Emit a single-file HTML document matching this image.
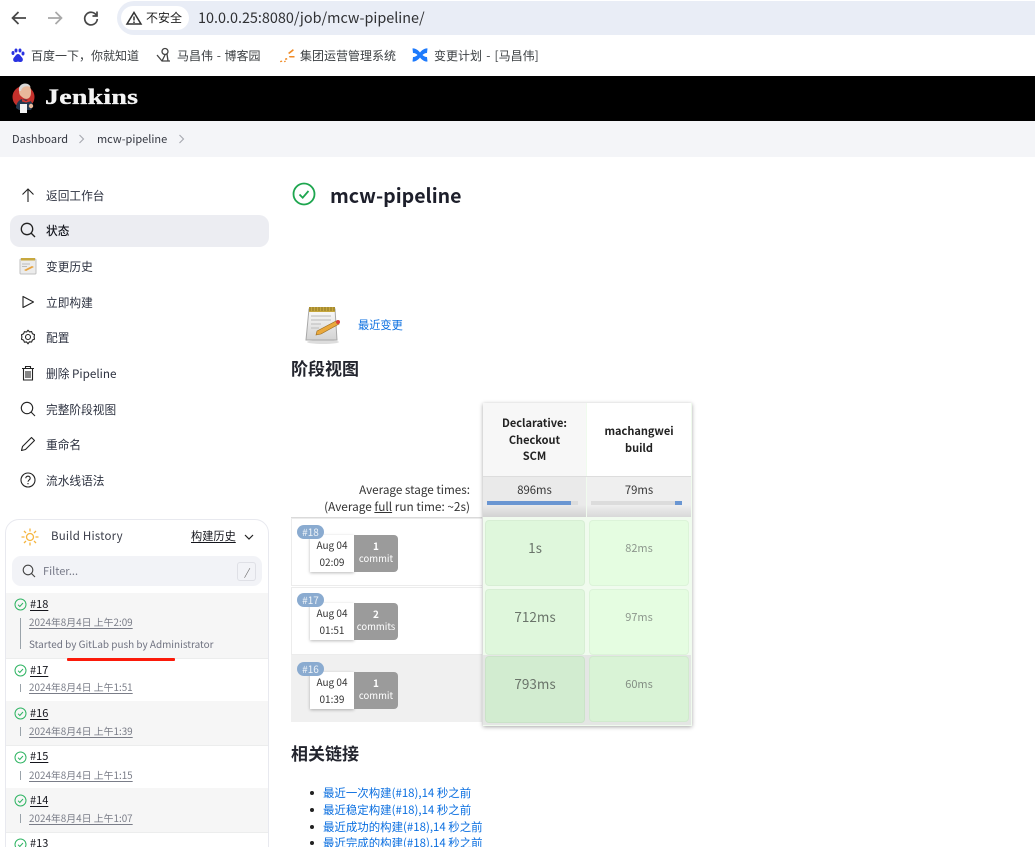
<!DOCTYPE html>
<html lang="zh"><head><meta charset="utf-8"><title>mcw-pipeline</title>
<style>
html{margin:0;padding:0;background:#fff;width:1035px;height:847px;overflow:hidden;}
body{margin:0;padding:0;background:#fff;width:1035px;height:847px;overflow:hidden;position:relative;font-family:"Noto Sans CJK SC","Liberation Sans",sans-serif;color:#1f2430;font-size:12px;}
.a{position:absolute;}
.t{position:absolute;white-space:nowrap;line-height:16px;}
svg{position:absolute;overflow:visible;}
.nav{left:46px;font-size:11.7px;color:#2d3240;}
.bm{top:47px;font-size:12px;color:#3c4043;line-height:18px;word-spacing:1px;}
.num{left:30px;font-size:11px;color:#14151c;text-decoration:underline;text-underline-offset:2px;}
.dt{left:29px;font-size:9.9px;color:#7a7d88;text-decoration:underline;text-underline-offset:2px;}
.tick{left:20px;width:1px;background:#9aa3aa;}
.lnk{left:323px;font-size:11.45px;color:#0b6fe0;}
.bul{width:4px;height:4px;border-radius:50%;background:#222;}
.badge{left:297px;width:27px;height:14px;border-radius:7px;background:#8aabd0;color:#eef3f8;font-size:10px;line-height:14px;text-align:center;z-index:3;}
.dc{left:310px;width:44px;height:37px;background:#fff;box-shadow:0 1px 3px rgba(0,0,0,.28);font-size:10px;color:#333;text-align:center;line-height:17px;z-index:2;padding-top:1px;box-sizing:border-box;}
.cm{left:354px;width:44px;height:37px;background:#9b9b9b;border-radius:0 4px 4px 0;color:#fff;font-size:9.5px;text-align:center;line-height:13px;z-index:2;}
.cm b{display:block;font-size:10px;padding-top:4px;}
.cell{border:1px solid rgba(0,0,0,.035);border-radius:4px;box-sizing:border-box;display:flex;align-items:center;justify-content:center;color:#6a746a;padding-bottom:13px;}
</style></head><body>

<!-- browser toolbar -->
<svg style="left:10px;top:9px" width="18" height="18" fill="none" stroke="#474747" stroke-width="1.7"><path d="M2.5 9H16M8.5 3L2.5 9l6 6"/></svg>
<svg style="left:46px;top:9px" width="18" height="18" fill="none" stroke="#a8a8a8" stroke-width="1.7"><path d="M15.5 9H2M9.5 3l6 6-6 6"/></svg>
<svg style="left:82px;top:9px" width="18" height="18" fill="none" stroke="#474747" stroke-width="1.7"><path d="M14.5 6.5A6.3 6.3 0 1 0 15.3 10"/><path d="M15 2.500v4.500h-4.500"/></svg>
<div class="a" style="left:117px;top:1px;width:940px;height:34px;border-radius:17px;background:#e9edf6"></div>
<div class="a" style="left:121px;top:6px;width:68px;height:24px;border-radius:12px;background:#fff"></div>
<svg style="left:126px;top:11px" width="16" height="14" fill="none" stroke="#333" stroke-width="1.5"><path d="M8 1.5L15 13H1z"/><path d="M8 5.5v4M8 10.5v1.500"/></svg>
<div class="t" style="left:146px;top:10px;font-size:12px;color:#222">不安全</div>
<div class="t" style="left:198px;top:9px;font-size:14.4px;line-height:18px;color:#2f3033">10.0.0.25:8080/job/mcw-pipeline/</div>

<!-- bookmarks -->
<svg style="left:10px;top:48px" width="15" height="15" fill="#2932e1"><ellipse cx="3" cy="5" rx="1.5" ry="2"/><ellipse cx="6" cy="2.5" rx="1.5" ry="2"/><ellipse cx="10" cy="2.5" rx="1.5" ry="2"/><ellipse cx="13" cy="5.5" rx="1.5" ry="2"/><path d="M8 6c-2 0-2.500 2-4 3.500C2.500 11 3 14 5.500 14c1 0 1.500-.4 2.500-.4s1.500.4 2.500.4c2.500 0 3-3 1.500-4.500C10.500 8 10 6 8 6z"/></svg>
<div class="t bm" style="left:31px">百度一下，你就知道</div>
<svg style="left:156px;top:47px" width="16" height="16" fill="none" stroke="#444" stroke-width="1.3"><circle cx="9" cy="4.5" r="3"/><path d="M1 8l5 6h8M11 7l1 7M6 14l3-6"/></svg>
<div class="t bm" style="left:177px">马昌伟 - 博客园</div>
<svg style="left:279px;top:48px" width="16" height="15" fill="#f08a24"><path d="M9 5l5-4 .8 1.500-4.500 3.500zM10 8h5.500v1.500H10.500zM6 10.500l2-.5.3 1.500-2 .5zM1 13l2-.5.3 1.300-2 .5zM5 13l1.500-.4.3 1.300-1.500.4z"/></svg>
<div class="t bm" style="left:300px">集团运营管理系统</div>
<svg style="left:412px;top:47px" width="16" height="16" fill="#1d7afc"><path d="M.5 1.500C3 1 6 3 8 5.500 10 3 13 1 15.500 1.500L15 6c-2 0-3.500 1-4.500 2 1 1 2.500 2 4.500 2l.5 4.500C13 15 10 13 8 10.500 6 13 3 15 .5 14.500L1 10c2 0 3.500-1 4.500-2C4.500 7 3 6 1 6z"/></svg>
<div class="t bm" style="left:434px;word-spacing:1.500px">变更计划 - [马昌伟]</div>

<!-- header -->
<div class="a" style="left:0;top:76px;width:1035px;height:45px;background:#000"></div>
<svg style="left:12px;top:82px" width="26" height="32">
<circle cx="11.5" cy="15" r="11" fill="#c4302b"/>
<path d="M7 9C7 4 10 2 13 2c4 0 6 3 6 7 0 3 0 5-2 7-2 1.500-5 1-7-1-2-1.500-3-3-3-6z" fill="#e8b89a"/>
<path d="M7 9C6 4 10 1.500 13 1.500c3 0 5 1.500 5.500 3.500C15 3.500 10 4 9 9z" fill="#d8d8d8"/>
<path d="M4 26c0-5 3-8 6-9l6 1c3 1 5 3 5 6l-2 4H7z" fill="#24384f"/>
<path d="M10 17l4 2 4-2v2.500l-4 1-4-1z" fill="#d33833"/>
<rect x="8" y="22" width="7" height="9" fill="#f3f3f3"/>
<circle cx="19" cy="24" r="2.200" fill="#e8b89a"/>
</svg>
<div class="t" style="left:45px;top:84px;font-family:'Liberation Serif',serif;font-weight:700;font-size:22.5px;line-height:26px;color:#f4f4f4;letter-spacing:.2px;transform:scaleX(1.24);transform-origin:0 50%;-webkit-text-stroke:.35px #f4f4f4">Jenkins</div>

<!-- breadcrumb -->
<div class="a" style="left:0;top:121px;width:1035px;height:36px;background:#f4f5f8"></div>
<div class="t" style="left:12px;top:131px;font-size:11px;color:#33363f">Dashboard</div>
<svg style="left:78px;top:134px" width="8" height="10" fill="none" stroke="#a6a8ae" stroke-width="1.1"><path d="M1.5 1l4 4-4 4"/></svg>
<div class="t" style="left:97px;top:131px;font-size:11px;color:#33363f">mcw-pipeline</div>
<svg style="left:178px;top:134px" width="8" height="10" fill="none" stroke="#a6a8ae" stroke-width="1.1"><path d="M1.5 1l4 4-4 4"/></svg>

<!-- sidebar -->
<div class="a" style="left:10px;top:215px;width:259px;height:32px;border-radius:10px;background:#ecedf2"></div>
<svg style="left:20px;top:187px" width="16" height="16" fill="none" stroke="#222" stroke-width="1.1"><path d="M8 15V2M2.500 7.500L8 2l5.500 5.500"/></svg>
<div class="t nav" style="top:188px">返回工作台</div>
<svg style="left:20px;top:222px" width="16" height="16" fill="none" stroke="#222" stroke-width="1.3"><circle cx="7" cy="7" r="5.7"/><path d="M11 11l4 4"/></svg>
<div class="t nav" style="top:223px;font-weight:500;color:#15171f">状态</div>
<svg style="left:19px;top:257px" width="19" height="18"><rect x="1" y="2" width="16" height="15" rx="1" fill="#ececec" stroke="#c0c0c0"/><rect x="2" y="1" width="14" height="2.5" fill="#c7a83f"/><path d="M5 13l8-4 2 1-8 4z" fill="#e8a33d"/><path d="M3 7h8M3 9.5h5" stroke="#bbb"/></svg>
<div class="t nav" style="top:259px">变更历史</div>
<svg style="left:20px;top:294px" width="16" height="16" fill="none" stroke="#222" stroke-width="1.1"><path d="M3 2.500v11L13.500 8z" stroke-linejoin="round"/></svg>
<div class="t nav" style="top:295px">立即构建</div>
<svg style="left:20px;top:329px" width="16" height="16" fill="none" stroke="#222" stroke-width="1.1"><path d="M8 1.200l1.400 1.700 2.200-.3.8 2.100 2.100.9-.4 2.300.4 2.200-2.100.9-.8 2.100-2.200-.3L8 14.800l-1.400-1.900-2.200.3-.8-2.100-2.100-.9.4-2.200-.4-2.300 2.100-.9.8-2.100 2.200.3z" stroke-linejoin="round"/><circle cx="8" cy="8" r="2.5"/></svg>
<div class="t nav" style="top:330px">配置</div>
<svg style="left:20px;top:365px" width="16" height="16" fill="none" stroke="#222" stroke-width="1.1"><path d="M2 3.500h12M5.500 3.500V1.500h5v2M3.500 3.500v11.500h9V3.500M6 6v7M8 6v7M10 6v7"/></svg>
<div class="t nav" style="top:366px">删除 Pipeline</div>
<svg style="left:20px;top:401px" width="16" height="16" fill="none" stroke="#222" stroke-width="1.1"><circle cx="7" cy="7" r="5.7"/><path d="M11 11l4 4"/></svg>
<div class="t nav" style="top:402px">完整阶段视图</div>
<svg style="left:20px;top:436px" width="16" height="16" fill="none" stroke="#222" stroke-width="1.1"><path d="M1.500 14.500l1-4L11.500 1.500l3 3-9 9z" stroke-linejoin="round"/></svg>
<div class="t nav" style="top:437px">重命名</div>
<svg style="left:20px;top:472px" width="16" height="16" fill="none" stroke="#222" stroke-width="1.1"><circle cx="8" cy="8" r="7"/><path d="M5.800 6.200C5.800 3.500 10.200 3.500 10.200 6.200c0 1.800-2.200 1.800-2.200 3.600M8 11v1.200"/></svg>
<div class="t nav" style="top:473px">流水线语法</div>

<!-- build history -->
<div class="a" style="left:5px;top:519px;width:262px;height:340px;border:1px solid #e8e9ef;border-radius:14px"></div>
<svg style="left:21px;top:528px" width="18" height="18" fill="none" stroke="#f5b53f" stroke-width="1.3"><circle cx="9" cy="9" r="3.5"/><path d="M9 .5v3M9 14.500v3M.5 9h3M14.500 9h3M3 3l2 2M13 13l2 2M3 15l2-2M13 5l2-2"/></svg>
<div class="t" style="left:51px;top:528px;font-size:11.5px;color:#3a3d49;letter-spacing:.2px">Build History</div>
<div class="t" style="left:191px;top:528px;font-size:11.2px;color:#14151c;text-decoration:underline;text-underline-offset:2px">构建历史</div>
<svg style="left:244px;top:534px" width="10" height="7" fill="none" stroke="#222" stroke-width="1.2"><path d="M1 1l4 4 4-4"/></svg>
<div class="a" style="left:12px;top:556px;width:250px;height:30px;border-radius:9px;background:#f2f3f7"></div>
<svg style="left:22px;top:564px" width="14" height="14" fill="none" stroke="#444" stroke-width="1.1"><circle cx="6" cy="6" r="4.8"/><path d="M9.500 9.500L13 13"/></svg>
<div class="t" style="left:43px;top:563px;font-size:11px;color:#777a88">Filter...</div>
<div class="a" style="left:237px;top:562px;width:17px;height:17px;border:1px solid #dfe0e6;border-radius:3px;text-align:center;line-height:17px;font-size:10px;color:#666;font-style:italic">/</div>

<div class="a" style="left:6px;top:593px;width:262px;height:65px;background:#f6f6f6"></div>
<div class="a" style="left:6px;top:701px;width:262px;height:44px;background:#f6f6f6"></div>
<div class="a" style="left:6px;top:788px;width:262px;height:44px;background:#f6f6f6"></div>
<div class="a" style="left:6px;top:658px;width:262px;height:1px;background:#eceded"></div>
<div class="a" style="left:6px;top:745px;width:262px;height:1px;background:#eceded"></div>
<div class="a" style="left:6px;top:832px;width:262px;height:1px;background:#eceded"></div>

<svg style="left:14px;top:598px" width="13" height="13" fill="none" stroke="#2fb463" stroke-width="1"><circle cx="6.5" cy="6.5" r="5.5"/><path d="M4 6.700l1.800 1.800L9 5"/></svg>
<div class="t num" style="top:596px">#18</div>
<div class="a tick" style="top:618px;height:31px"></div>
<div class="t dt" style="top:614px">2024年8月4日 上午2:09</div>
<div class="t" style="left:29px;top:636px;font-size:9.95px;color:#6f7280">Started by GitLab push by Administrator</div>
<div class="a" style="left:67px;top:658px;width:108px;height:3px;background:#fb1a0a;border-radius:1px"></div>

<svg style="left:14px;top:664px" width="13" height="13" fill="none" stroke="#2fb463" stroke-width="1"><circle cx="6.5" cy="6.5" r="5.5"/><path d="M4 6.700l1.800 1.800L9 5"/></svg>
<div class="t num" style="top:662px">#17</div>
<div class="a tick" style="top:684px;height:8px"></div>
<div class="t dt" style="top:679px">2024年8月4日 上午1:51</div>

<svg style="left:14px;top:707px" width="13" height="13" fill="none" stroke="#2fb463" stroke-width="1"><circle cx="6.5" cy="6.5" r="5.5"/><path d="M4 6.700l1.800 1.800L9 5"/></svg>
<div class="t num" style="top:705px">#16</div>
<div class="a tick" style="top:727px;height:9px"></div>
<div class="t dt" style="top:723px">2024年8月4日 上午1:39</div>

<svg style="left:14px;top:751px" width="13" height="13" fill="none" stroke="#2fb463" stroke-width="1"><circle cx="6.5" cy="6.5" r="5.5"/><path d="M4 6.700l1.800 1.800L9 5"/></svg>
<div class="t num" style="top:748px">#15</div>
<div class="a tick" style="top:771px;height:9px"></div>
<div class="t dt" style="top:767px">2024年8月4日 上午1:15</div>

<svg style="left:14px;top:794px" width="13" height="13" fill="none" stroke="#2fb463" stroke-width="1"><circle cx="6.5" cy="6.5" r="5.5"/><path d="M4 6.700l1.800 1.800L9 5"/></svg>
<div class="t num" style="top:792px">#14</div>
<div class="a tick" style="top:814px;height:9px"></div>
<div class="t dt" style="top:810px">2024年8月4日 上午1:07</div>

<svg style="left:14px;top:838px" width="13" height="13" fill="none" stroke="#2fb463" stroke-width="1"><circle cx="6.5" cy="6.5" r="5.5"/><path d="M4 6.700l1.800 1.800L9 5"/></svg>
<div class="t" style="left:30px;top:835px;font-size:11px;color:#14151c">#13</div>

<!-- main -->
<svg style="left:292px;top:182px" width="24" height="24" fill="none" stroke="#1ea64f" stroke-width="1.8"><circle cx="12" cy="12" r="10.5"/><path d="M7.500 12.500l3.200 3.200L16.500 9"/></svg>
<div class="t" style="left:330px;top:181px;font-size:19.5px;line-height:28px;font-weight:700;color:#1d1f2b">mcw-pipeline</div>

<svg style="left:305px;top:306px" width="38" height="40">
<defs><linearGradient id="n" x1="0" y1="0" x2="0" y2="1"><stop offset="0" stop-color="#fbfbfb"/><stop offset="1" stop-color="#d3d3d3"/></linearGradient></defs>
<ellipse cx="18" cy="36" rx="16" ry="2" fill="#ddd"/>
<path d="M4 3h26l2 31H1z" fill="url(#n)" stroke="#a8a8a8"/>
<rect x="4" y="1" width="26" height="5" fill="#c5a63d"/>
<path d="M5 1v4M8 1v4M11 1v4M14 1v4M17 1v4M20 1v4M23 1v4M26 1v4M29 1v4" stroke="#8a7425" stroke-width="1"/>
<path d="M6 10h20M6 14h20M6 18h10M6 22h8" stroke="#c4c4c4" stroke-width="1.2"/>
<path d="M12 25l19-10 3 3-18 10-5 1z" fill="#e9a83c" stroke="#9a6a1c" stroke-width=".6"/>
<circle cx="33" cy="16" r="2" fill="#d9413a"/>
</svg>
<div class="t" style="left:358px;top:317px;font-size:11.2px;color:#0b6fe0">最近变更</div>
<div class="t" style="left:291px;top:357px;font-size:17px;line-height:22px;font-weight:700;color:#23252e">阶段视图</div>

<!-- stage view left -->
<div class="t" style="right:565px;top:482px;font-size:11.7px;color:#333">Average stage times:</div>
<div class="t" style="right:565px;top:499px;font-size:11.8px;color:#333">(Average <u>full</u> run time: ~2s)</div>
<div class="a" style="left:291px;top:517px;width:191px;height:1px;background:#dadada"></div>
<div class="a" style="left:291px;top:518px;width:190px;height:66px;border:1px solid #ececec;border-right:0"></div>
<div class="a" style="left:291px;top:587px;width:190px;height:66px;border:1px solid #ececec;border-right:0"></div>
<div class="a" style="left:291px;top:655px;width:191px;height:67px;background:#f0f0f0"></div>

<div class="a badge" style="top:525px">#18</div>
<div class="a dc" style="top:535px"><div>Aug 04</div><div>02:09</div></div>
<div class="a cm" style="top:535px"><b>1</b>commit</div>
<div class="a badge" style="top:593px">#17</div>
<div class="a dc" style="top:603px"><div>Aug 04</div><div>01:51</div></div>
<div class="a cm" style="top:603px"><b>2</b>commits</div>
<div class="a badge" style="top:662px">#16</div>
<div class="a dc" style="top:672px"><div>Aug 04</div><div>01:39</div></div>
<div class="a cm" style="top:672px"><b>1</b>commit</div>

<!-- stage panel -->
<div class="a" style="left:483px;top:403px;width:209px;height:323px;background:#f0fbee;box-shadow:0 1px 4px rgba(0,0,0,.35)"></div>
<div class="a" style="left:483px;top:403px;width:103px;height:73px;background:#f7f7f7;text-align:center;font-size:11px;line-height:16.5px;font-weight:700;color:#222;box-sizing:border-box;padding-top:12px">Declarative:<br>Checkout<br>SCM</div>
<div class="a" style="left:587px;top:403px;width:104px;height:73px;background:#fff;text-align:center;font-size:11px;line-height:16.5px;font-weight:700;color:#222;box-sizing:border-box;padding-top:20px">machangwei<br>build</div>
<div class="a" style="left:483px;top:476px;width:208px;height:1px;background:#ddd"></div>
<div class="a" style="left:483px;top:477px;width:103px;height:40px;background:linear-gradient(#eaeaea 0,#eaeaea 70%,#d2d2d2 100%)"></div>
<div class="a" style="left:587px;top:477px;width:104px;height:40px;background:linear-gradient(#efefef 0,#efefef 70%,#d8d8d8 100%)"></div>
<div class="t" style="left:483px;top:482px;width:103px;text-align:center;font-size:11.3px;color:#333">896ms</div>
<div class="t" style="left:587px;top:482px;width:104px;text-align:center;font-size:11.3px;color:#333">79ms</div>
<div class="a" style="left:487px;top:501px;width:91px;height:4px;background:#dcdcdc"></div>
<div class="a" style="left:487px;top:501px;width:84px;height:4px;background:#6a96d2"></div>
<div class="a" style="left:591px;top:501px;width:91px;height:4px;background:#dcdcdc"></div>
<div class="a" style="left:675px;top:501px;width:7px;height:4px;background:#6a96d2"></div>

<div class="a cell" style="left:485px;top:520px;width:100px;height:66px;background:#dff7dc;font-size:13.5px">1s</div>
<div class="a cell" style="left:589px;top:520px;width:100px;height:66px;background:#e5fde1;font-size:11px;color:#8d978d;padding-bottom:11px">82ms</div>
<div class="a" style="left:483px;top:655px;width:208px;height:70px;background:#e4e6e4"></div>
<div class="a cell" style="left:485px;top:589px;width:100px;height:66px;background:#dff7dc;font-size:13.5px">712ms</div>
<div class="a cell" style="left:589px;top:589px;width:100px;height:66px;background:#e5fde1;font-size:11px;color:#8d978d;padding-bottom:11px">97ms</div>
<div class="a cell" style="left:485px;top:656px;width:100px;height:67px;background:#d2ecd0;font-size:13.5px">793ms</div>
<div class="a cell" style="left:589px;top:656px;width:100px;height:66px;background:#d9f3d6;font-size:11px;color:#838d83;padding-bottom:11px">60ms</div>

<!-- related -->
<div class="t" style="left:291px;top:742px;font-size:17px;line-height:22px;font-weight:700;color:#23252e">相关链接</div>
<div class="a bul" style="left:310px;top:791px"></div><div class="t lnk" style="top:785px">最近一次构建(#18),14 秒之前</div>
<div class="a bul" style="left:310px;top:808px"></div><div class="t lnk" style="top:802px">最近稳定构建(#18),14 秒之前</div>
<div class="a bul" style="left:310px;top:825px"></div><div class="t lnk" style="top:819px">最近成功的构建(#18),14 秒之前</div>
<div class="a bul" style="left:310px;top:841px"></div><div class="t lnk" style="top:835px">最近完成的构建(#18),14 秒之前</div>

</body></html>
